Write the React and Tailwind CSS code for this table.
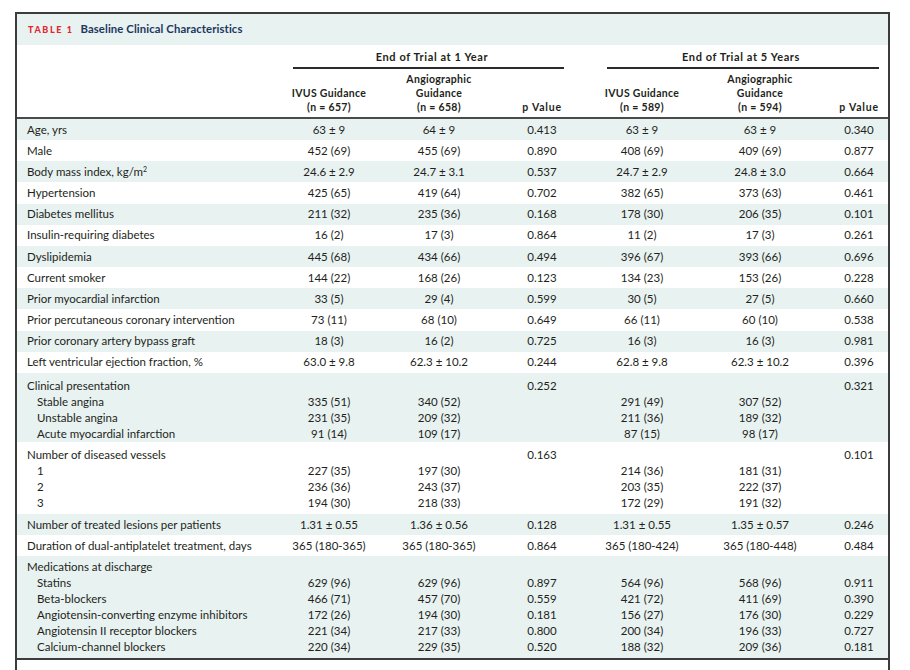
const font = { fontFamily: 'Lato, "Liberation Sans", sans-serif' }

const cols = 'grid grid-cols-[273px_78px_142px_64px_26px_84px_152px_46px]'

const single = [
  ['Age, yrs', '63 ± 9', '64 ± 9', '0.413', '63 ± 9', '63 ± 9', '0.340'],
  ['Male', '452 (69)', '455 (69)', '0.890', '408 (69)', '409 (69)', '0.877'],
  [<>Body mass index, kg/m<sup className="text-[7px]">2</sup></>, '24.6 ± 2.9', '24.7 ± 3.1', '0.537', '24.7 ± 2.9', '24.8 ± 3.0', '0.664'],
  ['Hypertension', '425 (65)', '419 (64)', '0.702', '382 (65)', '373 (63)', '0.461'],
  ['Diabetes mellitus', '211 (32)', '235 (36)', '0.168', '178 (30)', '206 (35)', '0.101'],
  ['Insulin-requiring diabetes', '16 (2)', '17 (3)', '0.864', '11 (2)', '17 (3)', '0.261'],
  ['Dyslipidemia', '445 (68)', '434 (66)', '0.494', '396 (67)', '393 (66)', '0.696'],
  ['Current smoker', '144 (22)', '168 (26)', '0.123', '134 (23)', '153 (26)', '0.228'],
  ['Prior myocardial infarction', '33 (5)', '29 (4)', '0.599', '30 (5)', '27 (5)', '0.660'],
  ['Prior percutaneous coronary intervention', '73 (11)', '68 (10)', '0.649', '66 (11)', '60 (10)', '0.538'],
  ['Prior coronary artery bypass graft', '18 (3)', '16 (2)', '0.725', '16 (3)', '16 (3)', '0.981'],
  ['Left ventricular ejection fraction, %', '63.0 ± 9.8', '62.3 ± 10.2', '0.244', '62.8 ± 9.8', '62.3 ± 10.2', '0.396'],
]

const clinical = [
  ['Clinical presentation', '', '', '0.252', '', '', '0.321'],
  ['Stable angina', '335 (51)', '340 (52)', '', '291 (49)', '307 (52)', ''],
  ['Unstable angina', '231 (35)', '209 (32)', '', '211 (36)', '189 (32)', ''],
  ['Acute myocardial infarction', '91 (14)', '109 (17)', '', '87 (15)', '98 (17)', ''],
]

const vessels = [
  ['Number of diseased vessels', '', '', '0.163', '', '', '0.101'],
  ['1', '227 (35)', '197 (30)', '', '214 (36)', '181 (31)', ''],
  ['2', '236 (36)', '243 (37)', '', '203 (35)', '222 (37)', ''],
  ['3', '194 (30)', '218 (33)', '', '172 (29)', '191 (32)', ''],
]

const meds = [
  ['Medications at discharge', '', '', '', '', '', ''],
  ['Statins', '629 (96)', '629 (96)', '0.897', '564 (96)', '568 (96)', '0.911'],
  ['Beta-blockers', '466 (71)', '457 (70)', '0.559', '421 (72)', '411 (69)', '0.390'],
  ['Angiotensin-converting enzyme inhibitors', '172 (26)', '194 (30)', '0.181', '156 (27)', '176 (30)', '0.229'],
  ['Angiotensin II receptor blockers', '221 (34)', '217 (33)', '0.800', '200 (34)', '196 (33)', '0.727'],
  ['Calcium-channel blockers', '220 (34)', '229 (35)', '0.520', '188 (32)', '209 (36)', '0.181'],
]

const Line = ({ cells, indent }) => (
  <div className={`${cols} leading-[16px] whitespace-nowrap`}>
    <div className={indent ? 'pl-[20px]' : 'pl-[10px]'}>{cells[0]}</div>
    <div className="text-center">{cells[1]}</div>
    <div className="text-center">{cells[2]}</div>
    <div className="text-center">{cells[3]}</div>
    <div />
    <div className="text-center">{cells[4]}</div>
    <div className="text-center">{cells[5]}</div>
    <div className="text-center">{cells[6]}</div>
  </div>
)

const Group = ({ lines, shaded, className }) => (
  <div className={`${shaded ? 'bg-[#e8f2f1]' : 'bg-white'} ${className}`}>
    {lines.map((l, i) => <Line key={i} cells={l} indent={i > 0} />)}
  </div>
)

export default function App() {
  return (
    <div className="w-[910px] h-[670px] overflow-hidden bg-white pt-3 pl-[15px] text-[11.5px] text-[#231f20]" style={font}>
      <div className="w-[875px] h-[700px] border-2 border-[#3c3c3c]">
        {/* title band */}
        <div className="h-[31px] bg-[#e8f2f1] flex items-center pl-[11px] gap-[7px]">
          <span className="text-[9px] font-black tracking-[1.6px] text-[#e2262e]">TABLE 1</span>
          <span className="text-[11.3px] font-bold text-[#1d3660] tracking-[0.1px]">Baseline Clinical Characteristics</span>
        </div>

        {/* column headers */}
        <div className="border-b-2 border-[#4a4a4a] font-bold text-[10.5px] tracking-[0.3px] pb-[3px]">
          <div className={`${cols} pt-[5px]`}>
            <div />
            <div className="col-span-3 flex flex-col">
              <div className="text-center leading-[14px] text-[11px] tracking-[0.6px]">End of Trial at 1 Year</div>
              <div className="ml-[3px] mr-[10px] mt-[3px] h-[2px] bg-[#2a2a2a]" />
            </div>
            <div />
            <div className="col-span-3 flex flex-col">
              <div className="text-center leading-[14px] text-[11px] tracking-[0.6px]">End of Trial at 5 Years</div>
              <div className="ml-[7px] mr-[3px] mt-[3px] h-[2px] bg-[#2a2a2a]" />
            </div>
          </div>
          <div className={`${cols} leading-[14px] whitespace-nowrap pt-[3px] items-end`}>
            <div />
            <div className="text-center">IVUS Guidance<br />(n = 657)</div>
            <div className="text-center">Angiographic<br />Guidance<br />(n = 658)</div>
            <div className="text-center tracking-[0.8px]">p Value</div>
            <div />
            <div className="text-center">IVUS Guidance<br />(n = 589)</div>
            <div className="text-center">Angiographic<br />Guidance<br />(n = 594)</div>
            <div className="text-center tracking-[0.8px]">p Value</div>
          </div>
        </div>

        {/* body */}
        {single.map((r, i) => (
          <div key={i} className={`h-[21.17px] pt-[2.6px] ${i % 2 === 0 ? 'bg-[#e8f2f1]' : 'bg-white'}`}>
            <Line cells={r} />
          </div>
        ))}
        <Group lines={clinical} shaded className="pt-[5px] h-[69px]" />
        <Group lines={vessels} className="pt-[5px] h-[72px]" />
        <div className="h-[21px] pt-[3px] bg-[#e8f2f1]">
          <Line cells={['Number of treated lesions per patients', '1.31 ± 0.55', '1.36 ± 0.56', '0.128', '1.31 ± 0.55', '1.35 ± 0.57', '0.246']} />
        </div>
        <div className="h-[21px] pt-[3px] bg-white">
          <Line cells={['Duration of dual-antiplatelet treatment, days', '365 (180-365)', '365 (180-365)', '0.864', '365 (180-424)', '365 (180-448)', '0.484']} />
        </div>
        <Group lines={meds} shaded className="pt-[3px] h-[104px] border-b-2 border-[#3c3c3c]" />
      </div>
    </div>
  )
}
